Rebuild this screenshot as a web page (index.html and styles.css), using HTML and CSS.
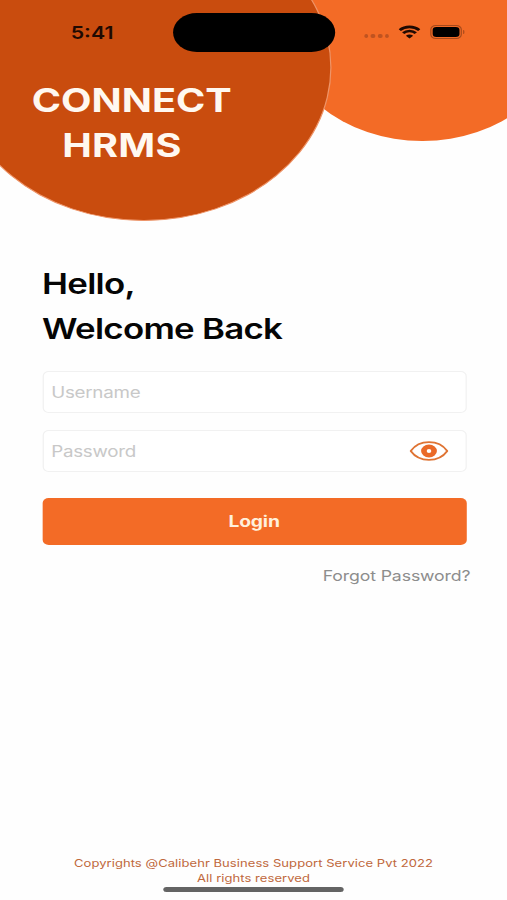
FILE: index.html
```html
<!DOCTYPE html>
<html lang="en">
<head>
    <meta charset="UTF-8" />
    <meta name="viewport" content="width=device-width, initial-scale=1" />
    <title>Connect HRMS</title>
    <link rel="stylesheet" href="styles.css">
</head>
<body>
    <div class="screen">
        <div class="circle circle-light"></div>
        <div class="circle circle-dark"></div>

        <div class="status-bar">
            <span class="time">5:41</span>
            <span class="island"></span>
            <div class="status-icons">
                <span class="dots"><i></i><i></i><i></i><i></i></span>
                <svg class="wifi" viewBox="0 0 18 14" width="18" height="14">
                    <path d="M1 5.2a11.3 11.3 0 0 1 16 0M3.8 8.2a7.3 7.3 0 0 1 10.4 0" />
                    <path class="wifi-dot" d="M9 13.6 6 10.8a4.4 4.4 0 0 1 6 0z" />
                </svg>
                <span class="battery"><b></b></span>
                <span class="battery-cap"></span>
            </div>
        </div>

        <h1 class="brand">CONNECT<span>HRMS</span></h1>

        <main class="login">
            <h2>Hello,<br>Welcome Back</h2>
            <form>
                <input class="field" type="text" placeholder="Username">
                <div class="password">
                    <input class="field" type="password" placeholder="Password">
                    <svg class="eye" viewBox="0 0 32 20" width="32" height="20">
                        <path d="M1 10C8-1.8 24-1.8 31 10C24 21.8 8 21.8 1 10z" />
                        <circle cx="16" cy="10" r="4.2" />
                    </svg>
                </div>
                <button class="btn" type="button">Login</button>
            </form>
            <a class="forgot">Forgot Password?</a>
        </main>

        <footer>
            <p>Copyrights @Calibehr Business Support Service Pvt 2022</p>
            <p class="rights">All rights reserved</p>
            <div class="home-bar"></div>
        </footer>
    </div>
</body>
</html>
```
FILE: styles.css
```css
* {
    margin: 0;
    padding: 0;
    box-sizing: border-box;
    font-family: Inter, "Liberation Sans", sans-serif;
}
body {
    height: 900px;
    background: #fefefe;
    overflow: hidden;
}
.screen {
    position: relative;
    display: flex;
    flex-direction: column;
    width: 416px;
    height: 900px;
    overflow: hidden;
    transform: scaleX(1.21875);
    transform-origin: 0 0;
}
.circle { position: absolute; border-radius: 50%; }
.circle-light {
    left: 229px;
    top: -94px;
    width: 234.5px;
    height: 234.5px;
    background: #f36b26;
}
.circle-dark {
    left: -36px;
    top: -86px;
    width: 307.5px;
    height: 307px;
    background: #c94c0e;
    border: 1px solid #ee9468;
}

.status-bar {
    position: relative;
    display: flex;
    align-items: center;
    height: 64px;
    padding-left: 58px;
}
.time { width: 84px; font-size: 17.5px; font-weight: 600; color: #1f0a02; }
.island { width: 132.5px; height: 39px; border-radius: 20px; background: #000; }
.status-icons { display: flex; align-items: center; margin-left: 24px; }
.dots { display: flex; gap: 2.6px; width: 28.5px; padding-top: 8px; }
.dots i { width: 3.3px; height: 4px; border-radius: 50%; background: #bf5320; }
.wifi { fill: none; stroke: #1f0a02; stroke-width: 2.6; margin-right: 7.5px; }
.wifi-dot { fill: #1f0a02; stroke: none; }
.battery {
    width: 26px;
    height: 14px;
    padding: 1px;
    border: 1px solid #a84a1b;
    border-radius: 4.5px;
}
.battery b { display: block; height: 10px; border-radius: 3px; background: #000; }
.battery-cap { width: 1.5px; height: 4px; margin-left: 1px; border-radius: 0 2px 2px 0; background: #a84a1b; }

.brand {
    position: relative;
    padding: 15px 0 0 26px;
    font-size: 32.5px;
    font-weight: 650;
    letter-spacing: 0;
    line-height: 44.5px;
    color: #fff8f0;
}
.brand span { display: block; padding-left: 25px; letter-spacing: 0.2px; }

.login { display: flex; flex-direction: column; padding: 94px 33.5px 0 34.5px; }
.login h2 {
    font-size: 28.6px;
    font-weight: 600;
    letter-spacing: -0.6px;
    line-height: 44.5px;
    color: #050505;
}
form { display: flex; flex-direction: column; gap: 17px; margin-top: 20px; }
.field {
    display: block;
    width: 100%;
    height: 42px;
    padding: 0 6.5px;
    border: 1px solid #f1f1f1;
    border-radius: 5px;
    background: #fff;
    font-size: 15.4px;
    letter-spacing: -0.2px;
    outline: none;
}
.field::placeholder { color: #c8c8c8; opacity: 1; }
.password { position: relative; }
.eye { position: absolute; right: 14.5px; top: 11px; fill: none; stroke: #df7434; stroke-width: 1.6; }
.eye circle { stroke: #ea6a28; stroke-width: 4.6; }
.btn {
    height: 47px;
    margin-top: 9px;
    padding-bottom: 1px;
    border: 0;
    border-radius: 5px;
    background: #f36b26;
    color: #fff0dc;
    font-size: 15.8px;
    font-weight: 700;
    letter-spacing: -0.1px;
}
.forgot {
    align-self: flex-end;
    margin: 22px -3.5px 0 0;
    font-size: 14.5px;
    letter-spacing: -0.1px;
    line-height: 18px;
    color: #8d8d8d;
}

footer {
    margin-top: auto;
    text-align: center;
    font-size: 10.7px;
    letter-spacing: 0.04px;
    line-height: 15px;
    color: #c0683c;
}
.home-bar { width: 148px; height: 5px; margin: 1px auto 8.5px; border-radius: 3px; background: #646464; }
```
